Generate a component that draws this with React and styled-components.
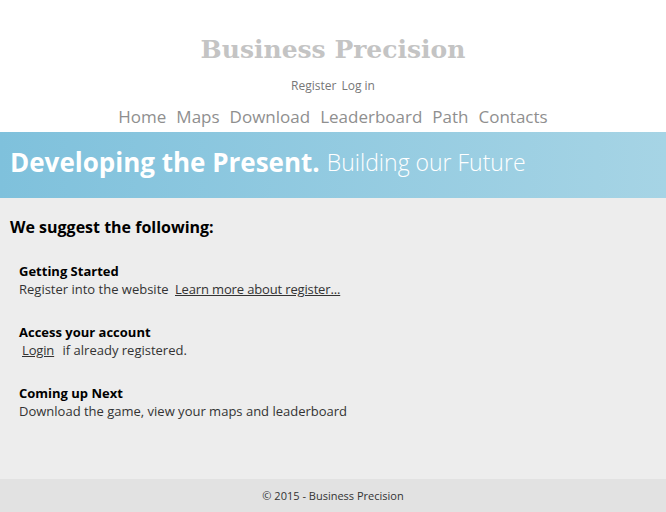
import React from 'react';
import styled, { createGlobalStyle } from 'styled-components';

const GlobalStyle = createGlobalStyle`
	body {
		margin: 0;
		background: #fff;
		font-family: 'Open Sans', 'Noto Sans', sans-serif;
	}
`;

const Page = styled.div`
	width: 666px;
	height: 512px;
	display: flex;
	flex-direction: column;
	overflow: hidden;
`;

const Header = styled.header`
	display: flex;
	flex-direction: column;
	align-items: center;
	padding-top: 33px;
`;

const Brand = styled.h1`
	margin: 0;
	font-family: 'DejaVu Serif', serif;
	font-weight: bold;
	font-size: 25px;
	line-height: 34px;
	color: #c4c4c4;
`;

const AccountLinks = styled.div`
	display: flex;
	gap: 5px;
	margin-top: 11px;
	font-size: 12px;
	line-height: 16px;
	color: #777;
`;

const Menu = styled.nav`
	display: flex;
	gap: 10px;
	margin-top: 11px;
	font-size: 17px;
	line-height: 24px;
	color: #8f8f8f;
`;

const Banner = styled.section`
	margin-top: 3px;
	height: 66px;
	display: flex;
	align-items: center;
	padding: 0 10px 7px;
	box-sizing: border-box;
	background: linear-gradient(to right, #7fc1dc, #a6d4e5);
	color: #fff;
	font-size: 26px;
`;

const Strong = styled.span`
	font-weight: bold;
	margin-right: 7px;
`;

const Light = styled.span`
	font-weight: 300;
	font-size: 23px;
`;

const Main = styled.main`
	flex: 1;
	background: #ededed;
	padding: 18px 10px 0;
`;

const Lead = styled.h2`
	margin: 0 0 24px;
	font-size: 16px;
	line-height: 22px;
	font-weight: bold;
	color: #000;
`;

const Item = styled.div`
	padding-left: 9px;
	margin-bottom: 25px;
`;

const ItemTitle = styled.div`
	font-size: 13px;
	line-height: 18px;
	font-weight: bold;
	color: #000;
`;

const ItemText = styled.div`
	font-size: 13px;
	line-height: 18px;
	color: #333;
`;

const TextLink = styled.a`
	color: #333;
	text-decoration: underline;
	letter-spacing: -0.15px;
	margin: ${(p) => p.m || '0'};
`;

const Footer = styled.footer`
	height: 33px;
	background: #e2e2e2;
	display: flex;
	align-items: center;
	justify-content: center;
	font-size: 11px;
	color: #333;
`;

export default function App() {
	return (
		<Page>
			<GlobalStyle />
			<Header>
				<Brand>Business Precision</Brand>
				<AccountLinks>
					<span>Register</span>
					<span>Log in</span>
				</AccountLinks>
				<Menu>
					<span>Home</span>
					<span>Maps</span>
					<span>Download</span>
					<span>Leaderboard</span>
					<span>Path</span>
					<span>Contacts</span>
				</Menu>
			</Header>
			<Banner>
				<Strong>Developing the Present.</Strong>
				<Light>Building our Future</Light>
			</Banner>
			<Main>
				<Lead>We suggest the following:</Lead>
				<Item>
					<ItemTitle>Getting Started</ItemTitle>
					<ItemText>
						Register into the website{' '}
						<TextLink href='#' m='0 0 0 3px'>
							Learn more about register...
						</TextLink>
					</ItemText>
				</Item>
				<Item>
					<ItemTitle>Access your account</ItemTitle>
					<ItemText>
						<TextLink href='#' m='0 5px 0 3px'>
							Login
						</TextLink>{' '}
						if already registered.
					</ItemText>
				</Item>
				<Item>
					<ItemTitle>Coming up Next</ItemTitle>
					<ItemText>Download the game, view your maps and leaderboard</ItemText>
				</Item>
			</Main>
			<Footer>© 2015 - Business Precision</Footer>
		</Page>
	);
}
